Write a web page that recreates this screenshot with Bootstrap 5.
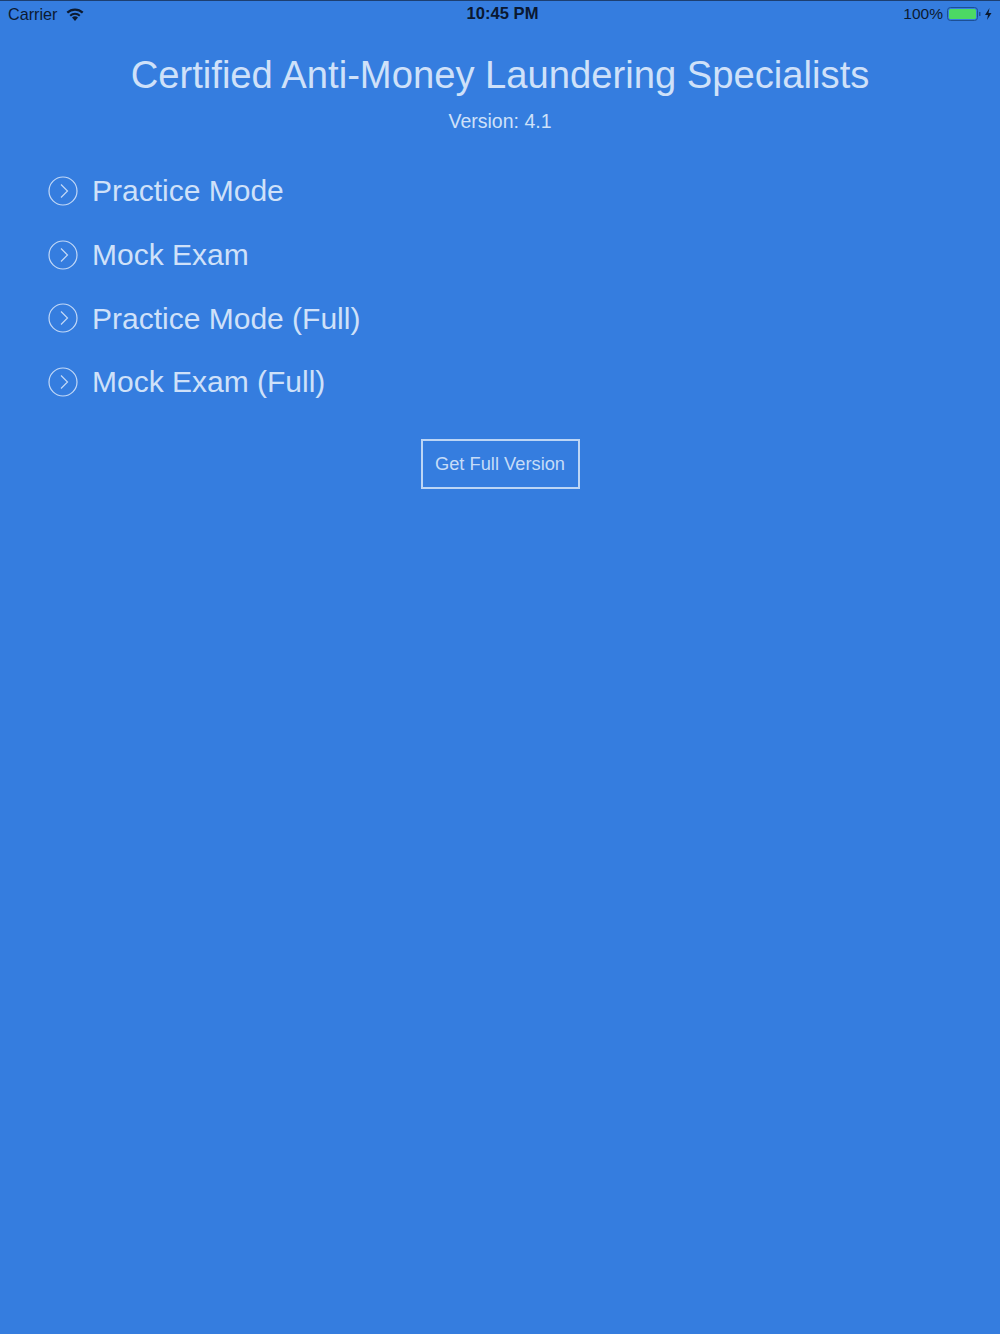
<!doctype html>
<html lang="en">
  <head>
    <meta charset="UTF-8" />
    <meta name="viewport" content="width=device-width, initial-scale=1" />
    <title>Certified Anti-Money Laundering Specialists</title>
    <link href="https://cdn.jsdelivr.net/npm/bootstrap@5.3.0/dist/css/bootstrap.min.css" rel="stylesheet" />
    <style>
      html, body {
        height: 100%;
      }
      body {
        background: #357ddf;
        color: #cfe1f9;
        font-family: "Liberation Sans", Arial, sans-serif;
        overflow: hidden;
        border-top: 1px solid #1d3f70;
      }
      .status-bar {
        height: 26px;
        padding: 0 7px 0 8px;
        color: #0c1a30;
        font-size: 16.2px;
        line-height: 26px;
      }
      .status-left {
        width: 204px;
        gap: 9px;
      }
      .status-right {
        width: 200px;
        gap: 4px;
      }
      .status-pct {
        font-size: 15.5px;
      }
      .status-time {
        font-weight: 700;
        font-size: 16.6px;
        color: #0a1830;
      }
      .app-title {
        margin: 23px 0 0;
        font-size: 38.2px;
        line-height: 50px;
        font-weight: 400;
        color: #cfe1f9;
      }
      .app-version {
        margin-top: 8px;
        font-size: 19.5px;
        line-height: 26px;
      }
      .menu-list {
        margin-top: 25px;
        padding-left: 48px;
      }
      .menu-row {
        height: 63.7px;
        gap: 14px;
        font-size: 30px;
        color: #cfe1f9;
        text-decoration: none;
      }
      .menu-icon {
        fill: none;
        stroke: #c3d9f7;
        stroke-width: 1.2;
      }
      .btn-full {
        width: 159px;
        height: 50px;
        margin-top: 25px;
        border: 2px solid #bcd5f5;
        border-radius: 0;
        background: transparent;
        color: #c6dcf8;
        font-size: 18.3px;
        padding: 0;
      }
      .btn-full:hover {
        background: transparent;
        color: #c6dcf8;
        border-color: #bcd5f5;
      }
    </style>
  </head>
  <body>
    <!-- Status bar -->
    <div class="status-bar d-flex justify-content-between align-items-center">
      <div class="status-left d-flex align-items-center">
        <span>Carrier</span>
        <svg width="18" height="13" viewBox="0 0 18 13">
          <path d="M9 13 6 9.6a4.4 4.4 0 0 1 6 0Z" fill="#0c1a30" />
          <path d="M4.2 7.7a7 7 0 0 1 9.6 0" fill="none" stroke="#0c1a30" stroke-width="2" />
          <path d="M1.3 4.6a11.2 11.2 0 0 1 15.4 0" fill="none" stroke="#0c1a30" stroke-width="2.2" />
        </svg>
      </div>
      <div class="status-time">10:45 PM</div>
      <div class="status-right d-flex align-items-center justify-content-end">
        <span class="status-pct">100%</span>
        <svg width="46" height="14" viewBox="0 0 46 14">
          <rect x="0.5" y="0.5" width="30" height="13" rx="3" fill="none" stroke="#1d4f94" />
          <rect x="2" y="2" width="27" height="10" rx="1.5" fill="#4cd964" />
          <rect x="32" y="5" width="1.5" height="4" fill="#1d4f94" />
          <path d="M42.5 1 38 8h3l-1 5 4.5-7h-3Z" fill="#0c1a30" />
        </svg>
      </div>
    </div>

    <!-- Header -->
    <div class="text-center">
      <h1 class="app-title">Certified Anti-Money Laundering Specialists</h1>
      <div class="app-version">Version: 4.1</div>
    </div>

    <!-- Menu -->
    <div class="menu-list d-flex flex-column">
      <a class="menu-row d-flex align-items-center" href="#">
        <svg width="30" height="30" viewBox="0 0 30 30" class="menu-icon"><circle cx="15" cy="15" r="14" /><path d="M13 8.5l6.5 6.5-6.5 6.5" /></svg>
        <span>Practice Mode</span>
      </a>
      <a class="menu-row d-flex align-items-center" href="#">
        <svg width="30" height="30" viewBox="0 0 30 30" class="menu-icon"><circle cx="15" cy="15" r="14" /><path d="M13 8.5l6.5 6.5-6.5 6.5" /></svg>
        <span>Mock Exam</span>
      </a>
      <a class="menu-row d-flex align-items-center" href="#">
        <svg width="30" height="30" viewBox="0 0 30 30" class="menu-icon"><circle cx="15" cy="15" r="14" /><path d="M13 8.5l6.5 6.5-6.5 6.5" /></svg>
        <span>Practice Mode (Full)</span>
      </a>
      <a class="menu-row d-flex align-items-center" href="#">
        <svg width="30" height="30" viewBox="0 0 30 30" class="menu-icon"><circle cx="15" cy="15" r="14" /><path d="M13 8.5l6.5 6.5-6.5 6.5" /></svg>
        <span>Mock Exam (Full)</span>
      </a>
    </div>

    <!-- Upgrade button -->
    <div class="text-center">
      <button type="button" class="btn btn-full">Get Full Version</button>
    </div>

    <script src="https://cdn.jsdelivr.net/npm/bootstrap@5.3.0/dist/js/bootstrap.bundle.min.js"></script>
  </body>
</html>
